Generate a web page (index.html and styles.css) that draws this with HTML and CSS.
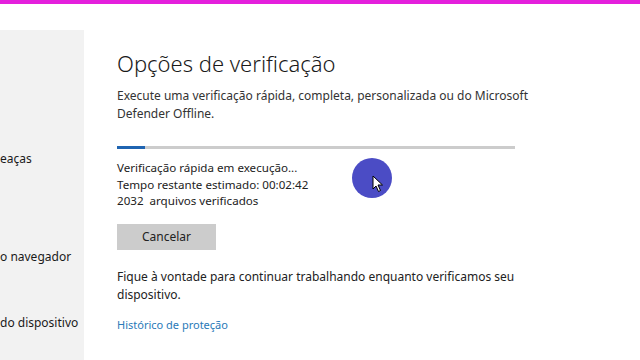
FILE: index.html
```html
<!DOCTYPE html>
<html lang="pt-BR">
<head>
    <meta charset="UTF-8">
    <meta name="viewport" content="width=device-width, initial-scale=1.0">
    <title>Opções de verificação</title>
    <link rel="stylesheet" href="styles.css">
</head>
<body>

<div class="top-bar"></div>

<div class="window">
    <nav class="sidebar">
        <div class="nav-item first">eaças</div>
        <div class="nav-item second">o navegador</div>
        <div class="nav-item last">do dispositivo</div>
    </nav>

    <main class="content">
        <h1>Opções de verificação</h1>
        <p class="intro">Execute uma verificação rápida, completa, personalizada ou do Microsoft Defender Offline.</p>

        <div class="progress">
            <div class="progress-fill" style="width: 7%"></div>
        </div>

        <div class="status">
            <div>Verificação rápida em execução...</div>
            <div>Tempo restante estimado: 00:02:42</div>
            <div>2032&nbsp; arquivos verificados</div>
        </div>

        <button class="btn">Cancelar</button>

        <p class="note">Fique à vontade para continuar trabalhando enquanto verificamos seu dispositivo.</p>

        <a class="link" href="#">Histórico de proteção</a>
    </main>

    <div class="cursor">
        <svg width="12" height="18" viewBox="0 0 12 18">
            <path d="M1 1 L1 14 L4 11 L6.5 16.5 L8.5 15.5 L6 10 L10.5 10 Z" fill="#fff" stroke="#000" stroke-width="1"/>
        </svg>
    </div>
</div>

</body>
</html>
```

FILE: styles.css
```css
body {
    margin: 0;
    font-family: "Noto Sans", "Open Sans", sans-serif;
    color: #222;
    background-color: #fff;
    overflow: hidden;
}

.top-bar {
    height: 4px;
    background-color: #e41fdc;
}

.window {
    position: relative;
    display: flex;
    height: 356px;
}

.sidebar {
    width: 84px;
    flex-shrink: 0;
    margin-top: 26px;
    background-color: #f2f2f2;
    font-size: 12px;
    color: #1a1a1a;
}

.nav-item {
    white-space: nowrap;
    line-height: 16px;
}

.nav-item.first {
    margin-top: 121px;
}

.nav-item.second {
    margin-top: 82px;
}

.nav-item.last {
    margin-top: 50px;
}

.content {
    padding-left: 33px;
    width: 420px;
}

h1 {
    font-weight: 300;
    font-size: 22px;
    margin: 44px 0 0;
    line-height: 30px;
    color: #1a1a1a;
}

.intro {
    font-size: 12px;
    line-height: 18px;
    margin: 9px 0 0;
    color: #333;
}

.progress {
    margin-top: 23px;
    width: 398px;
    height: 3px;
    background-color: #cccccc;
}

.progress-fill {
    height: 100%;
    background-color: #1f64b1;
}

.status {
    margin-top: 11px;
    font-size: 11.6px;
    line-height: 16.5px;
    color: #222;
}

.btn {
    display: block;
    margin-top: 14px;
    width: 99px;
    height: 26px;
    border: none;
    background-color: #cccccc;
    font-family: inherit;
    font-size: 12px;
    color: #222;
    padding: 0;
}

.note {
    font-size: 12px;
    line-height: 18px;
    margin: 18px 0 0;
    color: #222;
}

.link {
    display: inline-block;
    margin-top: 13px;
    font-size: 11px;
    color: #2a7ab8;
    text-decoration: none;
}

.cursor {
    position: absolute;
    left: 352px;
    top: 154px;
    width: 40px;
    height: 40px;
    border-radius: 50%;
    background-color: #4b4cc5;
}

.cursor svg {
    position: absolute;
    left: 20px;
    top: 17px;
}
```
